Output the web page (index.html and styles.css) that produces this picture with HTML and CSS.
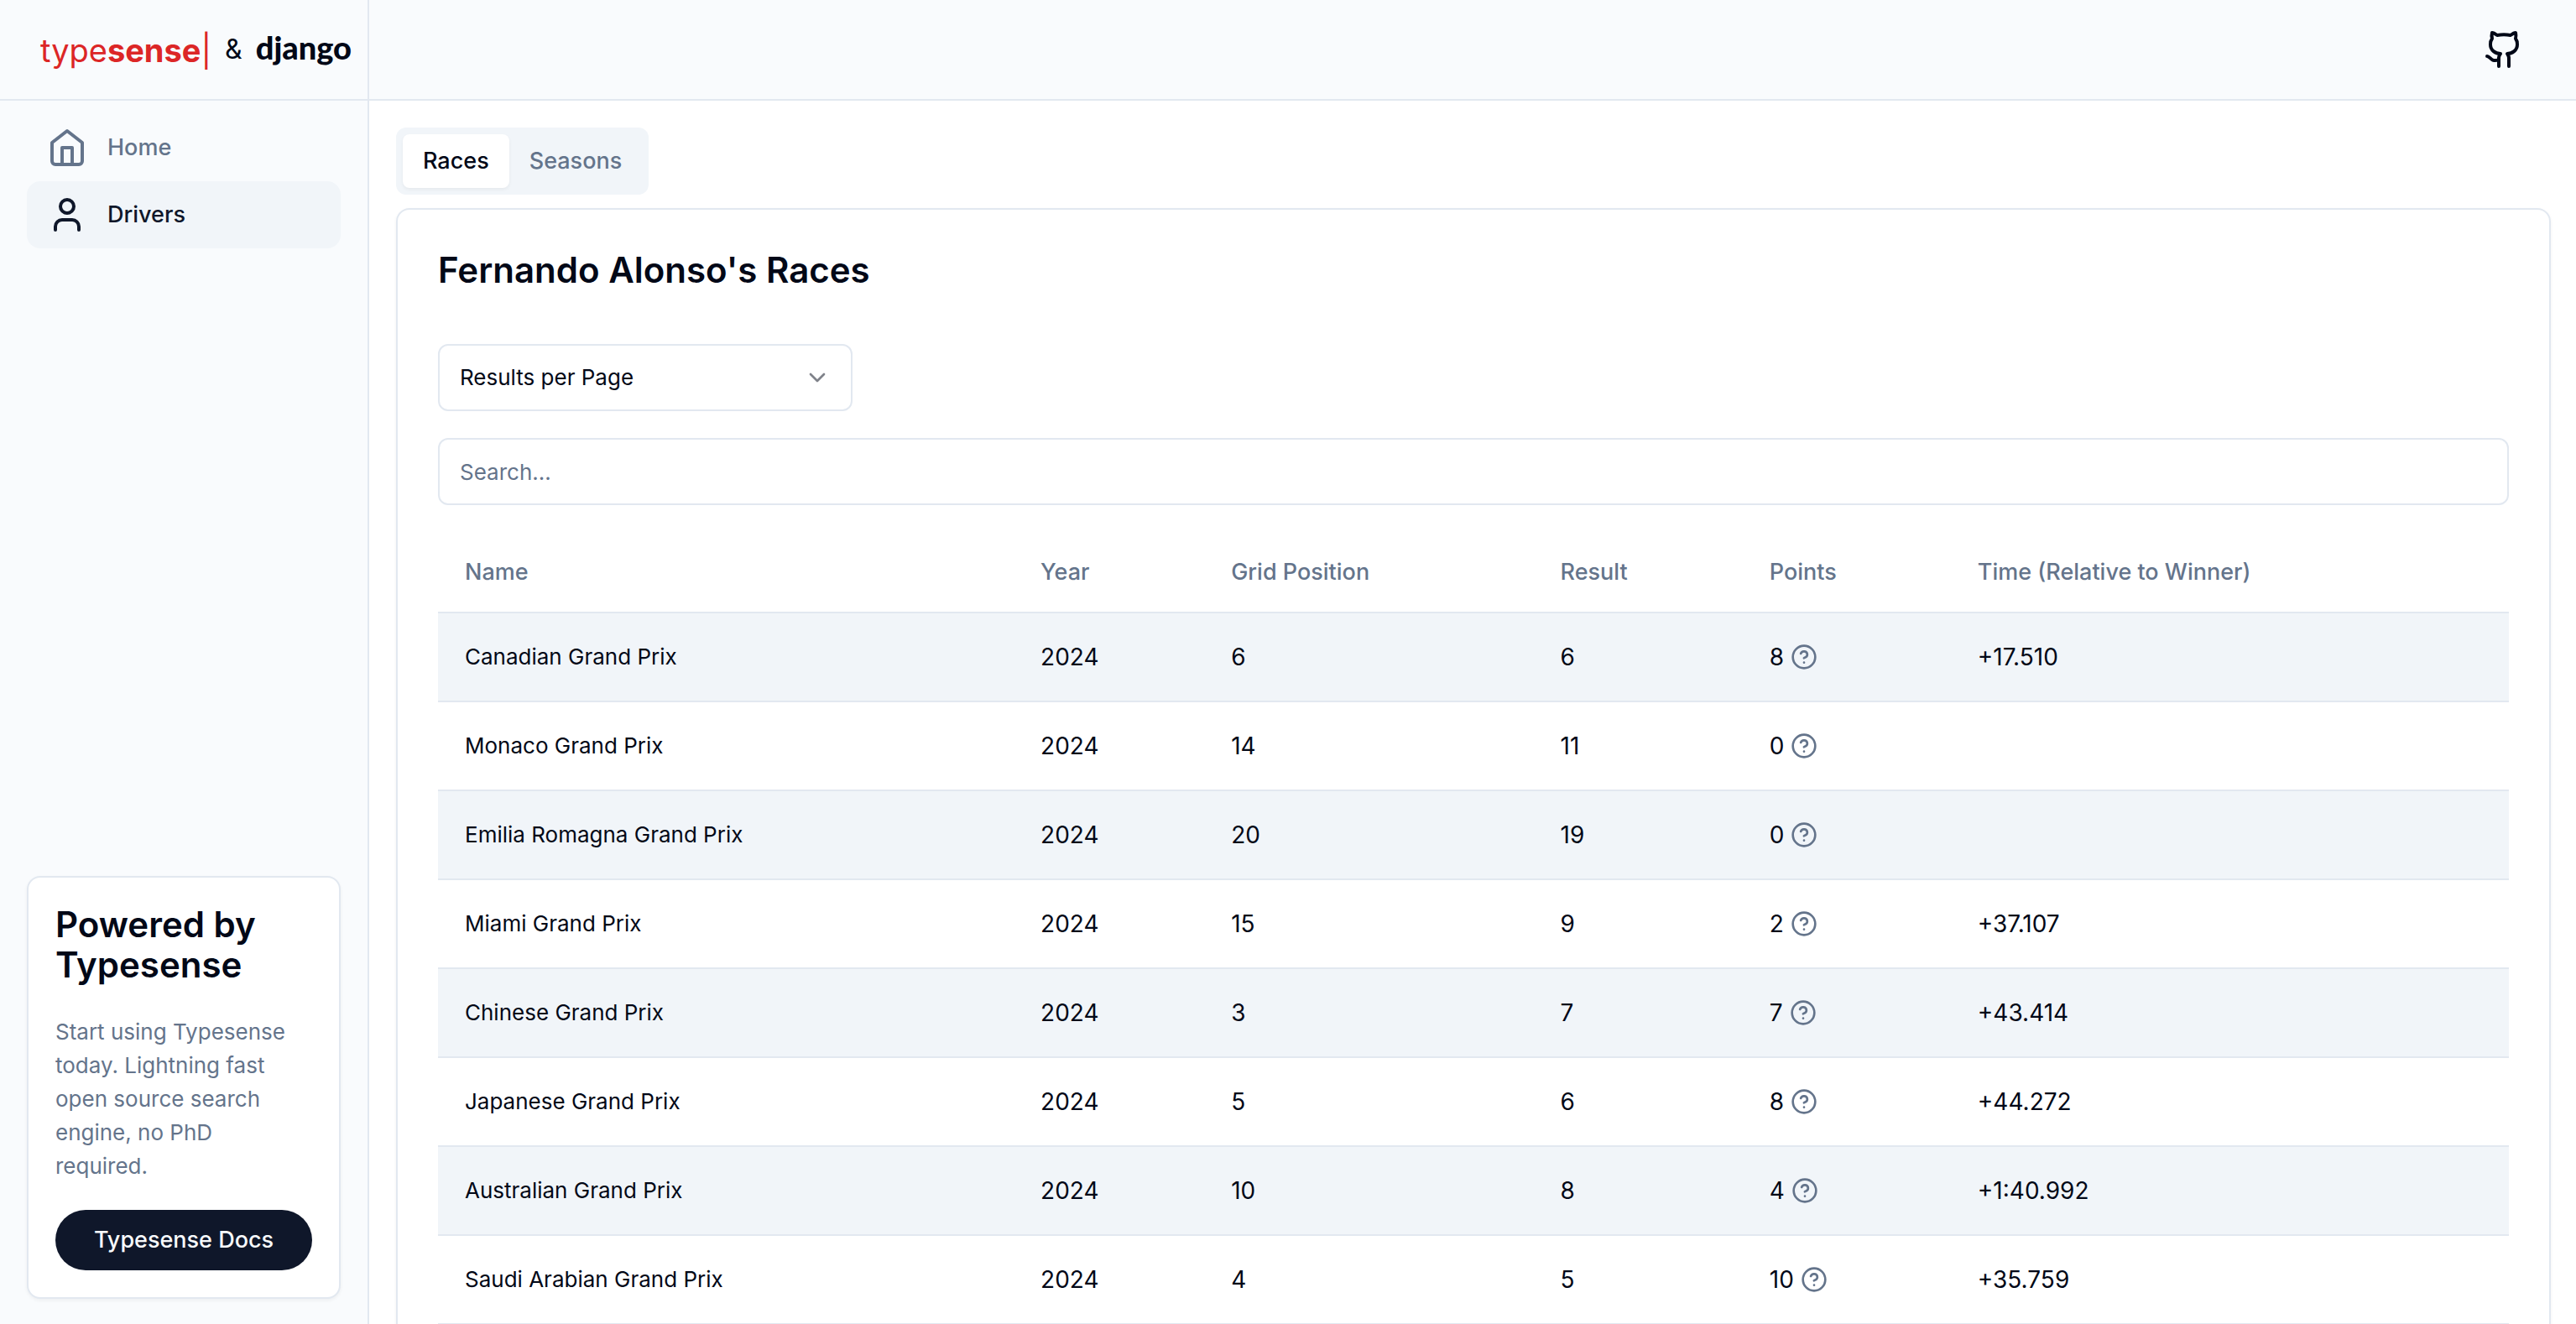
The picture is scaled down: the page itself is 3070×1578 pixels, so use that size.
FILE: index.html
```html
<!DOCTYPE html>
<html lang="en">
<head>
<meta charset="utf-8">
<meta name="viewport" content="width=device-width, initial-scale=1">
<title>Fernando Alonso's Races</title>
<link rel="stylesheet" href="styles.css">
</head>
<body>
<svg class="sprite" aria-hidden="true">
  <symbol id="help" viewBox="0 0 24 24"><circle cx="12" cy="12" r="10"/><path d="M9.09 9a3 3 0 0 1 5.83 1c0 2-3 3-3 3"/><path d="M12 17h.01"/></symbol>
</svg>
<div class="app">
  <aside class="sidebar">
    <a class="brand" href="#">
      <span class="typesense">type<b>sense</b>|</span>
      <span class="amp">&amp;</span>
      <span class="django">django</span>
    </a>
    <nav class="nav">
      <a class="nav-link" href="#">
        <svg class="icon" viewBox="0 0 24 24"><path d="m3 9 9-7 9 7v11a2 2 0 0 1-2 2H5a2 2 0 0 1-2-2z"/><polyline points="9 22 9 12 15 12 15 22"/></svg>
        Home
      </a>
      <a class="nav-link active" href="#" aria-current="page">
        <svg class="icon" viewBox="0 0 24 24"><path d="M19 21v-2a4 4 0 0 0-4-4H9a4 4 0 0 0-4 4v2"/><circle cx="12" cy="7" r="4"/></svg>
        Drivers
      </a>
    </nav>
    <section class="promo">
      <h2 class="title">Powered by Typesense</h2>
      <p class="promo-text">Start using Typesense today. Lightning fast open source search engine, no PhD required.</p>
      <button class="promo-button" type="button">Typesense Docs</button>
    </section>
  </aside>
  <div class="page">
    <header class="topbar">
      <a class="github" href="#" aria-label="GitHub">
        <svg class="icon" viewBox="0 0 24 24"><path d="M15 22v-4a4.8 4.8 0 0 0-1-3.5c3 0 6-2 6-5.5.08-1.25-.27-2.48-1-3.5.28-1.15.28-2.35 0-3.5 0 0-1 0-3 1.5-2.64-.5-5.36-.5-8 0C6 2 5 2 5 2c-.3 1.15-.3 2.35 0 3.5A5.403 5.403 0 0 0 4 9c0 3.5 3 5.5 6 5.5-.39.49-.68 1.05-.85 1.65-.17.6-.22 1.23-.15 1.85v4"/><path d="M9 18c-4.51 2-5-2-7-2"/></svg>
      </a>
    </header>
    <main class="main">
      <div class="tabs" role="tablist">
        <button class="tab selected" type="button" role="tab" aria-selected="true">Races</button>
        <button class="tab" type="button" role="tab" aria-selected="false">Seasons</button>
      </div>
      <section class="card">
        <h1 class="title">Fernando Alonso's Races</h1>
        <div class="select-wrap">
          <select class="field" aria-label="Results per Page">
            <option>Results per Page</option>
            <option>10</option>
            <option>20</option>
          </select>
          <svg class="chevron" viewBox="0 0 24 24"><path d="m6 9 6 6 6-6"/></svg>
        </div>
        <input class="field" type="text" placeholder="Search..." aria-label="Search">
        <table class="results">
          <colgroup>
            <col class="c-name"><col class="c-year"><col class="c-grid"><col class="c-result"><col class="c-points"><col>
          </colgroup>
          <thead>
            <tr><th>Name</th><th>Year</th><th>Grid Position</th><th>Result</th><th>Points</th><th>Time (Relative to Winner)</th></tr>
          </thead>
          <tbody>
            <tr><td class="name">Canadian Grand Prix</td><td>2024</td><td>6</td><td>6</td><td><span class="points">8<svg class="help"><use href="#help"/></svg></span></td><td>+17.510</td></tr>
            <tr><td class="name">Monaco Grand Prix</td><td>2024</td><td>14</td><td>11</td><td><span class="points">0<svg class="help"><use href="#help"/></svg></span></td><td></td></tr>
            <tr><td class="name">Emilia Romagna Grand Prix</td><td>2024</td><td>20</td><td>19</td><td><span class="points">0<svg class="help"><use href="#help"/></svg></span></td><td></td></tr>
            <tr><td class="name">Miami Grand Prix</td><td>2024</td><td>15</td><td>9</td><td><span class="points">2<svg class="help"><use href="#help"/></svg></span></td><td>+37.107</td></tr>
            <tr><td class="name">Chinese Grand Prix</td><td>2024</td><td>3</td><td>7</td><td><span class="points">7<svg class="help"><use href="#help"/></svg></span></td><td>+43.414</td></tr>
            <tr><td class="name">Japanese Grand Prix</td><td>2024</td><td>5</td><td>6</td><td><span class="points">8<svg class="help"><use href="#help"/></svg></span></td><td>+44.272</td></tr>
            <tr><td class="name">Australian Grand Prix</td><td>2024</td><td>10</td><td>8</td><td><span class="points">4<svg class="help"><use href="#help"/></svg></span></td><td>+1:40.992</td></tr>
            <tr><td class="name">Saudi Arabian Grand Prix</td><td>2024</td><td>4</td><td>5</td><td><span class="points">10<svg class="help"><use href="#help"/></svg></span></td><td>+35.759</td></tr>
          </tbody>
        </table>
      </section>
    </main>
  </div>
</div>
</body>
</html>
```
FILE: styles.css
```css
:root {
  --fg: #020817;
  --primary: #0f172a;
  --muted: #64748b;
  --border: #e2e8f0;
  --soft: #f1f5f9;
  --panel: #f9fbfd;
  --text: 26px;
  --label: 27px;
  --number: 28px;
}

* { box-sizing: border-box; }

body {
  margin: 0;
  background: #fff;
  color: var(--fg);
  font: 400 var(--text)/40px Inter, "Liberation Sans", sans-serif;
}

button, input, select { font: inherit; color: inherit; }
a { color: inherit; text-decoration: none; }
h1, h2, p { margin: 0; }
.sprite { display: none; }

.icon, .chevron, .help {
  flex: none;
  fill: none;
  stroke: currentColor;
  stroke-width: 2;
  stroke-linecap: round;
  stroke-linejoin: round;
}
.icon { width: 48px; height: 48px; }

.app {
  display: grid;
  grid-template-columns: 440px minmax(0, 1fr);
  height: 100vh;
}

/* Sidebar */
.sidebar {
  display: flex;
  flex-direction: column;
  background: var(--panel);
  border-right: 2px solid var(--border);
}
.brand {
  display: flex;
  align-items: center;
  height: 120px;
  padding-left: 48px;
  border-bottom: 2px solid var(--border);
}
.typesense { color: #dc2626; font-size: 38px; padding-top: 2px; }
.amp { margin: 0 16px; font-size: 32px; }
.django { font: 900 38px/40px Lato, sans-serif; padding-bottom: 6px; }

.nav { padding: 16px 32px; }
.nav-link {
  display: flex;
  align-items: center;
  gap: 24px;
  padding: 16px 24px;
  border-radius: 16px;
  color: var(--muted);
  font-size: var(--label);
  font-weight: 500;
}
.nav-link.active { background: var(--soft); color: var(--primary); }

.title { font-size: 42px; line-height: 48px; font-weight: 600; }

.promo {
  margin: auto 32px 30px;
  padding: 32px;
  background: #fff;
  border: 2px solid var(--border);
  border-radius: 16px;
  box-shadow: 0 2px 4px rgba(0, 0, 0, .05);
}
.promo-text { margin: 36px 0 32px; padding-right: 16px; color: var(--muted); }
.promo-button {
  width: 100%;
  height: 72px;
  padding: 0;
  border: 0;
  border-radius: 36px;
  background: var(--primary);
  color: #f8fafc;
  font-size: var(--label);
  font-weight: 500;
}

/* Main area */
.page { display: flex; flex-direction: column; min-height: 0; }
.topbar {
  flex: none;
  display: flex;
  align-items: center;
  justify-content: flex-end;
  height: 120px;
  padding: 0 62px;
  background: var(--panel);
  border-bottom: 2px solid var(--border);
}
.github { display: flex; }
.main {
  flex: 1;
  min-height: 0;
  padding: 32px 30px 32px 32px;
  overflow-y: auto;
  scrollbar-width: none;
}

.tabs {
  display: inline-flex;
  vertical-align: top;
  padding: 8px;
  border-radius: 12px;
  background: var(--soft);
}
.tab {
  height: 64px;
  padding: 0 24px;
  border: 0;
  border-radius: 8px;
  background: none;
  color: var(--muted);
  font-size: var(--label);
  font-weight: 500;
}
.tab.selected {
  background: #fff;
  color: var(--fg);
  box-shadow: 0 2px 4px rgba(0, 0, 0, .05);
}

.card {
  margin-top: 16px;
  padding: 48px;
  border: 2px solid var(--border);
  border-radius: 16px;
  box-shadow: 0 2px 4px rgba(0, 0, 0, .05);
}
.field {
  display: block;
  width: 100%;
  height: 80px;
  padding: 0 24px;
  border: 2px solid var(--border);
  border-radius: 12px;
  background: #fff;
  appearance: none;
}
.field::placeholder { color: var(--muted); opacity: 1; }
.select-wrap { position: relative; width: 20%; margin: 64px 0 32px; }
.chevron {
  position: absolute;
  right: 26px;
  top: 24px;
  width: 32px;
  height: 32px;
  opacity: .5;
  pointer-events: none;
}

.results {
  width: 100%;
  margin-top: 32px;
  table-layout: fixed;
  border-collapse: collapse;
}
.c-name { width: 27.8%; }
.c-year { width: 9.2%; }
.c-grid { width: 15.9%; }
.c-result { width: 10.1%; }
.c-points { width: 10.05%; }
.results th {
  height: 96px;
  padding: 0 32px;
  text-align: left;
  font-size: var(--label);
  font-weight: 500;
  color: var(--muted);
}
.results td { height: 106px; padding: 0 32px; font-size: var(--number); }
.results .name { font-size: var(--text); }
.results tr { border-bottom: 2px solid var(--border); }
.results tbody tr:nth-child(odd) { background: var(--soft); }
.points { display: flex; align-items: center; gap: 8px; }
.help { width: 32px; height: 32px; color: var(--muted); }
```
